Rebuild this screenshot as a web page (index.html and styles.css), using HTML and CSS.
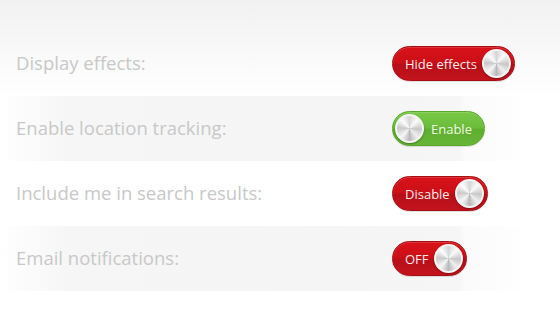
FILE: index.html
```html
<!DOCTYPE html>
<html lang="en">
<head>
    <meta charset="UTF-8">
    <meta name="viewport" content="width=device-width, initial-scale=1.0">
    <title>Settings</title>
    <link rel="stylesheet" href="styles.css">
</head>
<body>
    <div class="settings">
        <div class="setting">
            <span class="label">Display effects:</span>
            <button class="toggle off"><span class="text">Hide effects</span><span class="knob"></span></button>
        </div>
        <div class="setting band">
            <span class="label">Enable location tracking:</span>
            <button class="toggle on"><span class="knob"></span><span class="text">Enable</span></button>
        </div>
        <div class="setting">
            <span class="label">Include me in search results:</span>
            <button class="toggle off"><span class="text">Disable</span><span class="knob"></span></button>
        </div>
        <div class="setting band">
            <span class="label">Email notifications:</span>
            <button class="toggle off"><span class="text">OFF</span><span class="knob"></span></button>
        </div>
    </div>
</body>
</html>
```

FILE: styles.css
```css
body, html {
    margin: 0;
    height: 100%;
}
body {
    background: linear-gradient(#f1f1f1 0, #fff 96px, #fff 100%);
    font-family: "Open Sans", sans-serif;
}
.settings {
    padding-top: 31px;
}
.setting {
    display: flex;
    align-items: center;
    height: 65px;
    padding-left: 16px;
}
.band {
    background: linear-gradient(to right, #fff 0, #f6f6f6 12%, #f5f5f5 60%, #f6f6f6 82%, #fbfbfb 83%, #fff 95%);
}
.label {
    width: 376px;
    font-size: 18.5px;
    color: #c8c8c8;
    padding-bottom: 3px;
}
.toggle {
    display: flex;
    align-items: center;
    gap: 5px;
    height: 35px;
    padding: 0 3px 0 12px;
    border: 1px solid #a80d14;
    border-radius: 18px;
    font-family: "Open Sans", sans-serif;
    font-size: 13px;
    color: #fbeaea;
    cursor: pointer;
    box-shadow: 0 1px 1px rgba(0, 0, 0, 0.12), inset 0 1px 0 rgba(255, 255, 255, 0.15);
}
.toggle.off {
    background: linear-gradient(#d8121a 0, #cc0f17 48%, #b70f18 52%, #c3141d 100%);
}
.toggle.on {
    padding: 0 12px 0 2px;
    gap: 7px;
    border-color: #58a82a;
    color: #eefbe3;
    background: linear-gradient(#79c947 0, #6cbc3b 48%, #5fae30 52%, #66b535 100%);
}
.knob {
    width: 25px;
    height: 25px;
    border-radius: 50%;
    border: 2px solid #f4f4f4;
    background: conic-gradient(#d6d6d6, #fbfbfb 12%, #c7c7c7 26%, #efefef 38%, #b9b9b9 50%, #f7f7f7 62%, #c9c9c9 76%, #fdfdfd 88%, #d6d6d6);
    box-shadow: 0 1px 2px rgba(0, 0, 0, 0.35);
}
```
